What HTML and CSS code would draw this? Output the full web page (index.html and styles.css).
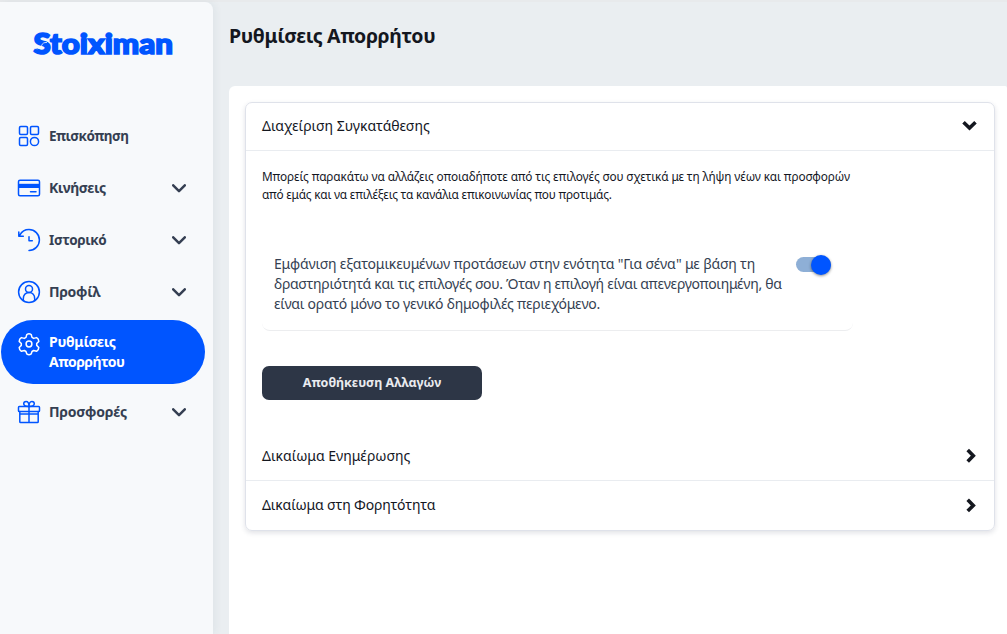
FILE: index.html
```
<!DOCTYPE html>
<html lang="el">
<head>
<meta charset="utf-8">
<title>Ρυθμίσεις Απορρήτου</title>
<link rel="stylesheet" href="styles.css">
</head>
<body>
<div class="layout">
  <aside class="sidebar">
    <svg class="logo" width="144" height="32" viewBox="0 0 144 32" role="img" aria-label="Stoiximan">
      <text class="logo-text" x="1.500" y="25" textLength="139.500" lengthAdjust="spacingAndGlyphs">Stoiximan</text>
      <path class="logo-cut" d="M3 19.500Q8.500 20.500 9.500 16.800T15 13.500"/>
    </svg>
    <nav class="nav">
      <a class="item"><svg class="icon" viewBox="0 0 24 24"><rect x="2.500" y="2.500" width="8" height="8" rx="1.200"/><rect x="13.500" y="2.500" width="8" height="8" rx="1.200"/><rect x="2.500" y="13.500" width="8" height="8" rx="1.200"/><circle cx="17.500" cy="17.500" r="4.100"/></svg><span class="n1">Επισκόπηση</span></a>
      <a class="item"><svg class="icon" viewBox="0 0 24 24"><rect x="1.500" y="4.200" width="21" height="15.500" rx="1.500"/><path class="solid" d="M1.500 7.800h21v4.200h-21z"/><path d="M13.500 15.700h5.500"/></svg><span class="n2">Κινήσεις</span><svg class="chev" viewBox="0 0 14 9"><path d="M1.200 1.300 7 7.100l5.800-5.800"/></svg></a>
      <a class="item"><svg class="icon" viewBox="0 0 24 24"><path d="M2.800 7.200C4.700 3.700 8 1.600 12 1.600a10.400 10.400 0 0 1 0 20.800M1.800 4v4.300h4.500M12 8.800v4h3.300"/></svg><span class="n3">Ιστορικό</span><svg class="chev" viewBox="0 0 14 9"><path d="M1.200 1.300 7 7.100l5.800-5.800"/></svg></a>
      <a class="item"><svg class="icon" viewBox="0 0 24 24"><circle cx="12" cy="12" r="10.400"/><circle cx="12" cy="8.900" r="3.500"/><path d="M6.300 20.300v-1.500c0-3.500 2-6.300 5.700-6.300s5.700 2.800 5.700 6.300v1.500"/></svg><span class="n4">Προφίλ</span><svg class="chev" viewBox="0 0 14 9"><path d="M1.200 1.300 7 7.100l5.800-5.800"/></svg></a>
      <a class="item active"><svg class="icon" viewBox="0 0 24 24"><circle cx="12" cy="12" r="2.900"/><path d="M9.800 2.500Q12 1 14.200 2.500l.8 2.900 1.700 1 2.900-.8q2.200 1.300 2.200 3.800l-2.100 2.100v1.900l2.100 2.100q0 2.500-2.200 3.800l-2.900-.8-1.700 1-.8 2.400q-2.200 1.500-4.400 0L9 19.500l-1.700-1-2.900.8q-2.200-1.300-2.200-3.800l2.100-2.100v-1.900L2.200 9.400q0-2.500 2.200-3.800l2.900.8L9 5.400z"/></svg><span class="n5"><span class="n5a">Ρυθμίσεις</span><br><span class="n5b">Απορρήτου</span></span></a>
      <a class="item"><svg class="icon" viewBox="0 0 24 24"><rect x="1.500" y="6.600" width="21" height="5" rx=".8"/><path d="M2.800 11.600v10.200c0 .5.300.8.800.8h16.800c.5 0 .8-.3.800-.8V11.600M12 6.600v16M2.800 14h18.400"/><path d="M12 6.500C8 6.500 6.700 5.300 6.700 3.800c0-1.400 1-2.400 2.400-2.400 2 0 2.900 2 2.900 5.100 0-3.100.9-5.100 2.900-5.100 1.400 0 2.400 1 2.400 2.400 0 1.500-1.300 2.700-5.300 2.700z"/></svg><span class="n6">Προσφορές</span><svg class="chev" viewBox="0 0 14 9"><path d="M1.200 1.300 7 7.100l5.800-5.800"/></svg></a>
    </nav>
  </aside>
  <main class="main">
    <h1 class="title">Ρυθμίσεις Απορρήτου</h1>
    <section class="panel">
      <div class="card">
        <div class="row first"><span class="r1">Διαχείριση Συγκατάθεσης</span><svg class="arrow" viewBox="0 0 16 16"><path d="M2.500 4.200 8.500 10l6-5.800"/></svg></div>
        <div class="content">
          <p class="intro"><span class="p1">Μπορείς παρακάτω να αλλάζεις οποιαδήποτε από τις επιλογές σου σχετικά με τη λήψη νέων και προσφορών</span><br><span class="p2">από εμάς και να επιλέξεις τα κανάλια επικοινωνίας που προτιμάς.</span></p>
          <div class="option">
            <p class="desc"><span class="d1">Εμφάνιση εξατομικευμένων προτάσεων στην ενότητα "Για σένα" με βάση τη</span><br><span class="d2">δραστηριότητά και τις επιλογές σου. Όταν η επιλογή είναι απενεργοποιημένη, θα</span><br><span class="d3">είναι ορατό μόνο το γενικό δημοφιλές περιεχόμενο.</span></p>
            <div class="switch"><div class="knob"></div></div>
          </div>
          <button class="save">Αποθήκευση Αλλαγών</button>
        </div>
        <div class="row second"><span class="r2">Δικαίωμα Ενημέρωσης</span><svg class="arrow" viewBox="0 0 16 16"><path d="M6.700 2 12.300 7.700l-5.600 5.700"/></svg></div>
        <div class="row third"><span class="r3">Δικαίωμα στη Φορητότητα</span><svg class="arrow" viewBox="0 0 16 16"><path d="M6.700 2.700 12.300 8.400l-5.600 5.700"/></svg></div>
      </div>
    </section>
  </main>
</div>
</body>
</html>
```
FILE: styles.css
```
* { box-sizing: border-box; }
body { margin: 0; font-family: "Noto Sans", sans-serif; background: #eaeef1; color: #14171f; overflow: hidden; }
.layout { display: flex; width: 1007px; height: 634px; border-top: 2px solid #e8eaec; }
.sidebar { width: 213px; flex: none; background: #f7f9fb; border-top-right-radius: 8px; box-shadow: 2px 0 8px rgba(40,60,80,.06); padding-top: 27px; }
.logo { display: block; margin-left: 32px; overflow: visible; }
.logo-text { font-family: Lato, sans-serif; font-weight: 900; font-size: 27.5px; line-height: 1; fill: #0055ff; stroke: #0055ff; stroke-width: 1.6; }
.logo-cut { fill: none; stroke: #f7f9fb; stroke-width: .8; }
.nav { margin-top: 49px; }
.item { display: flex; align-items: center; height: 52px; padding: 0 27px 0 17px; gap: 8px; font-size: 14px; line-height: 20px; font-weight: 700; color: #353f52; white-space: nowrap; }
.n1 { font-size: 13.5px; letter-spacing: -.5px; }
.n2 { letter-spacing: -.4px; }
.n3 { font-size: 13.5px; letter-spacing: -.35px; }
.n4 { letter-spacing: -.3px; }
.n5a { letter-spacing: -.3px; }
.n5b { letter-spacing: -.5px; }
.n6 { letter-spacing: -.2px; }
.icon { width: 24px; height: 24px; flex: none; fill: none; stroke: #0055ff; stroke-width: 1.5; stroke-linejoin: round; stroke-linecap: round; }
.icon .solid { fill: #0055ff; stroke: none; }
.chev { width: 14px; height: 9px; margin-left: auto; fill: none; stroke: #353f52; stroke-width: 2.5; stroke-linecap: round; stroke-linejoin: round; }
.item.active { width: 204px; height: 64px; margin: 2px 0 2px 1px; padding-left: 16px; border-radius: 32px; background: #0055ff; color: #fff; align-items: flex-start; padding-top: 12px; }
.active .icon { stroke: #fff; }
.main { flex: 1; padding-left: 16px; min-width: 0; display: flex; flex-direction: column; }
.title { margin: 0; padding-top: 20px; height: 84px; font-size: 19.5px; line-height: 28px; letter-spacing: -.37px; white-space: nowrap; }
.panel { flex: 1; background: #fff; border-radius: 6px 2px 0 0; padding: 16px 12px 0 16px; }
.card { height: 429px; border: 1px solid #dfe2ea; border-radius: 7px; box-shadow: 0 2px 5px rgba(40,50,80,.14); overflow: hidden; }
.row { display: flex; justify-content: space-between; align-items: center; padding: 0 17px 0 16px; font-size: 14px; line-height: 20px; white-space: nowrap; }
.first { height: 48px; padding-bottom: 2px; border-bottom: 1px solid #e9ecf0; }
.second { height: 50px; border-bottom: 1px solid #e9ecf0; }
.third { height: 49px; padding-bottom: 1px; }
.r3 { letter-spacing: -.15px; }
.arrow { width: 16px; height: 16px; fill: none; stroke: #14171f; stroke-width: 3.6; }
.content { height: 280px; padding: 16px 16px 0; }
.intro { margin: 0; font-size: 11.8px; line-height: 18px; white-space: nowrap; }
.p1 { letter-spacing: -.11px; }
.p2 { letter-spacing: -.19px; }
.option { display: flex; justify-content: space-between; width: 591px; height: 95px; margin-top: 33px; padding: 18px 22px 0 12px; border-bottom: 1px solid #ecedef; border-radius: 8px; }
.desc { margin: 0; width: 509px; font-size: 14px; line-height: 20px; color: #353f52; white-space: nowrap; }
.d1 { letter-spacing: -.19px; }
.d2 { letter-spacing: -.31px; }
.d3 { letter-spacing: -.24px; }
.switch { width: 35px; height: 15px; margin-top: 3px; border-radius: 8px; background: #8eafd6; display: flex; justify-content: flex-end; align-items: center; }
.knob { width: 20px; height: 20px; flex: none; border-radius: 50%; background: #0055ff; box-shadow: 0 1px 3px rgba(0,0,0,.45); }
.save { display: block; width: 220px; height: 34px; margin-top: 35px; padding: 0 0 2px; border: 0; border-radius: 7px; background: #2d3646; color: #e9ebef; font: 700 12.500px "Noto Sans", sans-serif; white-space: nowrap; }
```
